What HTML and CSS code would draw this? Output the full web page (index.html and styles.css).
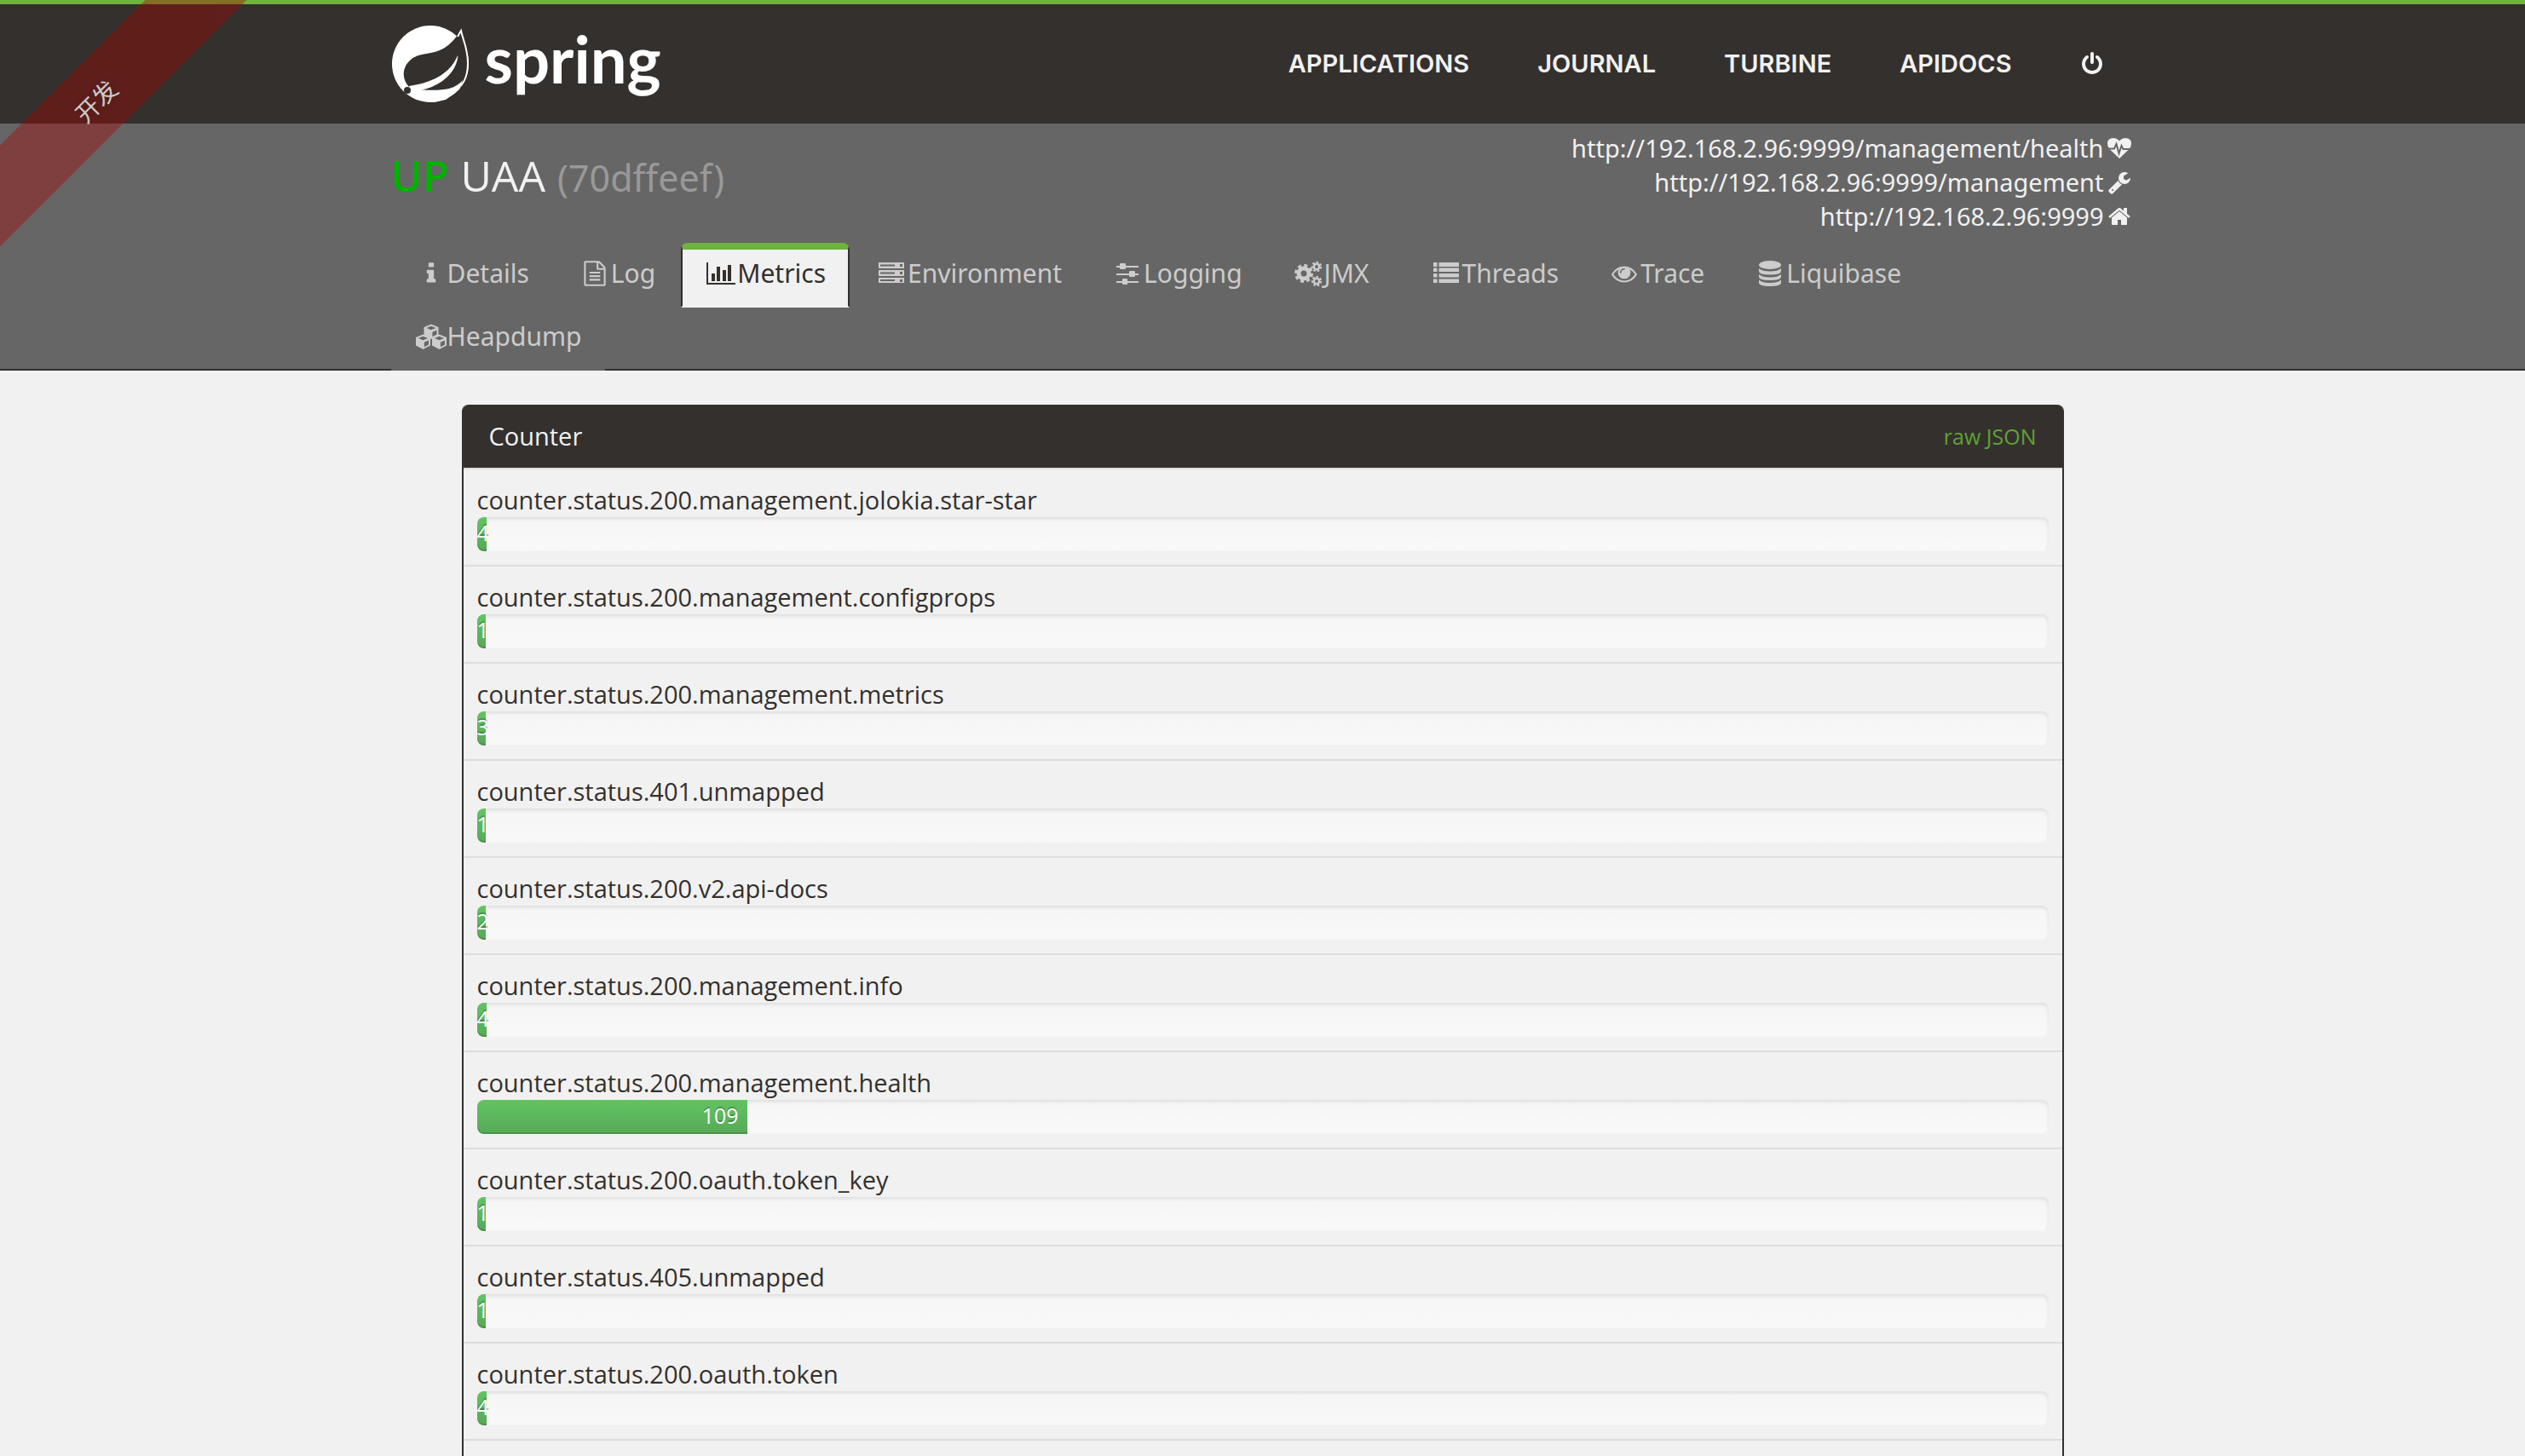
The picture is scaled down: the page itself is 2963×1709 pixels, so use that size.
FILE: index.html
```
<!DOCTYPE html>
<html lang="en">
<head>
<meta charset="utf-8">
<title>Spring Boot Admin - UAA Metrics</title>
<link rel="stylesheet" href="styles.css">
</head>
<body>
<div class="ribbon-corner"><span class="ribbon" lang="zh">开发</span></div>

<header class="topbar">
  <div class="container topbar-inner">
    <a class="logo" href="#">
      <svg class="logo-mark" viewBox="0 0 92 92" aria-hidden="true">
        <circle cx="46" cy="46" r="45" fill="#fff"/>
        <path d="M82 6C84 17 90 28 90 45C90 62 85 73 74 80C62 80 40 79 28 78C56 74 74 60 79 36C72 56 52 69 21 73C12 64 13 50 22 42C36 28 60 43 82 6Z" fill="#34302d"/>
        <path d="M78 14L82 7C84 17 90 28 90 45C90 63 83 74 73 77C63 80 45 78 27 77" fill="none" stroke="#fff" stroke-width="2"/>
        <path d="M21 72C50 68 70 56 78 36C77 59 54 75 24 77Z" fill="#fff"/>
        <path d="M28 77C50 76 72 80 84 65L80 76L64 88L50 91L30 88L20 82Z" fill="#fff"/>
        <circle cx="19" cy="77" r="4" fill="#34302d"/>
      </svg>
      <span>spring</span>
    </a>
    <nav class="main-nav" aria-label="Main">
      <a href="#">APPLICATIONS</a>
      <a href="#">JOURNAL</a>
      <a href="#">TURBINE</a>
      <a href="#">APIDOCS</a>
      <a href="#" aria-label="Sign out"><svg class="icon-power" viewBox="0 0 1792 1792"><path d="M1664 896q0 156-61 298t-164 245-245 164-298 61-298-61-245-164-164-245-61-298q0-182 80.500-343t226.500-270q43-32 95.500-25t83.500 50q32 42 24.500 94.500t-49.500 84.500q-98 74-151.500 181t-53.500 228q0 104 40.500 198.500t109.500 163.500 163.500 109.500 198.500 40.500 198.500-40.500 163.500-109.500 109.500-163.500 40.500-198.500q0-121-53.500-228t-151.500-181q-42-32-49.500-84.500t24.500-94.500q31-43 84-50t95 25q146 109 226.500 270t80.500 343zm-640-768v640q0 52-38 90t-90 38-90-38-38-90v-640q0-52 38-90t90-38 90 38 38 90z"/></svg></a>
    </nav>
  </div>
</header>

<section class="instance">
  <div class="container">
    <div class="instance-head">
      <h1><span class="status-up">UP</span> <span>UAA</span> <small>(70dffeef)</small></h1>
      <ul class="urls">
        <li><a href="#">http://192.168.2.96:9999/management/health<svg viewBox="0 0 36 28"><path d="M18 26L6.500 15Q4 12 4 8.500Q4 2 11 2Q15 2 18 5.500Q21 2 25 2Q32 2 32 8.500Q32 12 29.500 15Z"/><path d="M4 14.500H12L14.500 9L17.500 20L20.500 11L22.500 15H32" fill="none" stroke="#666" stroke-width="2"/></svg></a></li>
        <li><a href="#">http://192.168.2.96:9999/management<svg viewBox="-256 0 2304 1792"><path d="M448 1472q0-26-19-45t-45-19-45 19-19 45 19 45 45 19 45-19 19-45zm644-420l-682 682q-37 37-90 37-52 0-91-37l-106-108q-38-36-38-90 0-53 38-91l681-681q39 98 114.500 173.500t173.500 114.500zm634-435q0 39-23 106-47 134-164.500 217.500t-258.500 83.500q-185 0-316.500-131.500t-131.500-316.500 131.500-316.500 316.500-131.500q58 0 121.500 16.500t107.500 46.500q16 11 16 28t-16 28l-293 169v224l193 107q5-3 79-48.500t135.500-81 70.500-35.500q15 0 23.500 10t8.500 25z"/></svg></a></li>
        <li><a href="#">http://192.168.2.96:9999<svg viewBox="-256 0 2304 1792"><path d="M1472 992v480q0 26-19 45t-45 19h-384v-384h-256v384h-384q-26 0-45-19t-19-45v-480q0-1 .5-3t.5-3l575-474 575 474q1 2 1 6zm223-69l-62 74q-8 9-21 11h-3q-13 0-21-7l-692-577-692 577q-12 8-24 7-13-2-21-11l-62-74q-8-10-7-23.500t11-21.500l719-599q32-26 76-26t76 26l244 204v-195q0-14 9-23t23-9h192q14 0 23 9t9 23v408l219 182q10 8 11 21.500t-7 23.500z"/></svg></a></li>
      </ul>
    </div>
    <nav class="tabs" aria-label="Instance">
      <a href="#"><svg viewBox="-256 0 2304 1792"><path d="M1216 1344v128q0 26-19 45t-45 19h-512q-26 0-45-19t-19-45v-128q0-26 19-45t45-19h64v-384h-64q-26 0-45-19t-19-45v-128q0-26 19-45t45-19h384q26 0 45 19t19 45v576h64q26 0 45 19t19 45zm-128-1152v192q0 26-19 45t-45 19h-256q-26 0-45-19t-19-45v-192q0-26 19-45t45-19h256q26 0 45 19t19 45z"/></svg>Details</a>
      <a href="#"><svg viewBox="-256 0 2304 1792"><path d="M1596 380q28 28 48 76t20 88v1152q0 40-28 68t-68 28h-1344q-40 0-68-28t-28-68v-1600q0-40 28-68t68-28h896q40 0 88 20t76 48zm-444-244v376h376q-10-29-22-41l-313-313q-12-12-41-22zm384 1528v-1024h-416q-40 0-68-28t-28-68v-416h-768v1536h1280zm-1024-864q0-14 9-23t23-9h704q14 0 23 9t9 23v64q0 14-9 23t-23 9h-704q-14 0-23-9t-9-23v-64zm736 224q14 0 23 9t9 23v64q0 14-9 23t-23 9h-704q-14 0-23-9t-9-23v-64q0-14 9-23t23-9h704zm0 256q14 0 23 9t9 23v64q0 14-9 23t-23 9h-704q-14 0-23-9t-9-23v-64q0-14 9-23t23-9h704z"/></svg>Log</a>
      <a href="#" class="active" aria-current="page"><svg viewBox="0 0 38 30"><path d="M2 2h2v24h32v2H2zM8 15h4v9H8zM14 7h4v17h-4zM21 11h4v13h-4zM27 5h4v19h-4z"/></svg>Metrics</a>
      <a href="#"><svg viewBox="0 0 38 30"><path fill-rule="evenodd" d="M4 2h30v7H4zM6 4.500v2h17v-2zM29 4v3h3V4zM4 11h30v7H4zM6 13.500v2h17v-2zM29 13v3h3v-3zM4 20h30v6H4zM6 22v2h17v-2zM29 22v3h3v-3z"/></svg>Environment</a>
      <a href="#"><svg viewBox="0 0 38 30"><path d="M6 6h26v2H6zM6 15h26v2H6zM6 24h26v2H6zM10 4q0-1 1-1h5q1 0 1 1v5q0 1-1 1h-5q-1 0-1-1zM21 13q0-1 1-1h5q1 0 1 1v5q0 1-1 1h-5q-1 0-1-1zM13 22q0-1 1-1h4q1 0 1 1v5q0 1-1 1h-4q-1 0-1-1z"/></svg>Logging</a>
      <a href="#" class="tab-jmx"><svg viewBox="0 0 38 30"><g fill="none" stroke="currentColor"><circle cx="14" cy="15" r="6" stroke-width="5"/><circle cx="14" cy="15" r="9.500" stroke-width="3" stroke-dasharray="4 3.460"/><circle cx="29" cy="7" r="3.200" stroke-width="2.500"/><circle cx="29" cy="7" r="5.200" stroke-width="2" stroke-dasharray="2.500 2.170"/><circle cx="29" cy="24" r="3.200" stroke-width="2.500"/><circle cx="29" cy="24" r="5.200" stroke-width="2" stroke-dasharray="2.500 2.170"/></g></svg>JMX</a>
      <a href="#"><svg viewBox="0 0 38 30"><path d="M4 2h4.500v5H4zM10.500 2H34v5H10.500zM4 8.500h4.500v4.500H4zM10.500 8.500H34v4.500H10.500zM4 15h4.500v4.500H4zM10.500 15H34v4.500H10.500zM4 21.500h4.500V26H4zM10.500 21.500H34V26H10.500z"/></svg>Threads</a>
      <a href="#"><svg viewBox="-256 0 2304 1792"><path d="M1664 960q-152-236-381-353 61 104 61 225 0 185-131.500 316.500t-316.500 131.500-316.500-131.500-131.500-316.500q0-121 61-225-229 117-381 353 133 205 333.500 326.500t434.500 121.500 434.500-121.500 333.500-326.500zm-720-384q0-20-14-34t-34-14q-125 0-214.500 89.500t-89.500 214.500q0 20 14 34t34 14 34-14 14-34q0-86 61-147t147-61q20 0 34-14t14-34zm848 384q0 34-20 69-140 230-376.500 368.500t-499.500 138.500-499.500-139-376.500-368q-20-35-20-69t20-69q140-229 376.500-368t499.500-139 499.500 139 376.500 368q20 35 20 69z"/></svg>Trace</a>
      <a href="#"><svg viewBox="0 0 38 30"><ellipse cx="19" cy="5" rx="13" ry="5"/><path d="M6 9q4 3.500 13 3.500T32 9v3.500q0 4-13 4t-13-4zM6 16q4 3.500 13 3.500T32 16v3q0 4-13 4t-13-4zM6 22.500q4 3.500 13 3.500t13-3.500V26q0 4-13 4T6 26z"/></svg>Liquibase</a>
      <a href="#"><svg viewBox="0 0 38 30"><defs><g id="cube"><path fill-rule="evenodd" d="M0-8.500L8.500-5V4.500L0 9L-8.500 4.500V-5ZM0-6.200L-5.500-4L0-1.800L5.500-4ZM1.400 .8V6.200L6.500 3.500V-1.500Z"/></g></defs><use href="#cube" x="19" y="9"/><use href="#cube" x="9.500" y="21"/><use href="#cube" x="28.500" y="21"/></svg>Heapdump</a>
    </nav>
  </div>
</section>

<main class="panel">
  <div class="panel-head"><h2>Counter</h2><a href="#">raw JSON</a></div>
  <ul class="metrics">
    <li>counter.status.200.management.jolokia.star-star<div class="track"><div class="fill" style="width:.63%">4</div></div></li>
    <li>counter.status.200.management.configprops<div class="track"><div class="fill" style="width:.16%">1</div></div></li>
    <li>counter.status.200.management.metrics<div class="track"><div class="fill" style="width:.47%">3</div></div></li>
    <li>counter.status.401.unmapped<div class="track"><div class="fill" style="width:.16%">1</div></div></li>
    <li>counter.status.200.v2.api-docs<div class="track"><div class="fill" style="width:.32%">2</div></div></li>
    <li>counter.status.200.management.info<div class="track"><div class="fill" style="width:.63%">4</div></div></li>
    <li>counter.status.200.management.health<div class="track"><div class="fill" style="width:17.2%">109</div></div></li>
    <li>counter.status.200.oauth.token_key<div class="track"><div class="fill" style="width:.16%">1</div></div></li>
    <li>counter.status.405.unmapped<div class="track"><div class="fill" style="width:.16%">1</div></div></li>
    <li>counter.status.200.oauth.token<div class="track"><div class="fill" style="width:.63%">4</div></div></li>
  </ul>
</main>
</body>
</html>
```
FILE: styles.css
```
* { box-sizing: border-box; }

body {
  display: flex;
  flex-direction: column;
  min-height: 100vh;
  margin: 0;
  background: #f1f1f1;
  color: #34302d;
  font: 29px/40px "Open Sans", "Noto Sans CJK SC", sans-serif;
}

h1, h2, ul { margin: 0; padding: 0; font-weight: 400; list-style: none; }
a { color: inherit; text-decoration: none; }
svg { fill: currentColor; flex: none; }

.container {
  width: 100%;
  max-width: 2046px;
  margin: 0 auto;
}

/* Corner ribbon */
.ribbon-corner {
  position: absolute;
  top: 0;
  left: 0;
  width: 300px;
  height: 300px;
  overflow: hidden;
  pointer-events: none;
}
.ribbon {
  position: absolute;
  top: 76px;
  left: -103px;
  width: 430px;
  background: rgba(170, 0, 0, .5);
  color: #fff;
  font: 28px/84px "Noto Sans CJK SC", sans-serif;
  text-align: center;
  text-shadow: 0 0 10px rgba(0, 0, 0, .3);
  opacity: .75;
  transform: rotate(-45deg);
}

/* Top bar */
.topbar {
  border-top: 5px solid #6db33f;
  background: #34302d;
  color: #f1f1f1;
}
.topbar-inner {
  display: flex;
  justify-content: space-between;
  align-items: center;
  height: 140px;
}
.logo {
  display: flex;
  align-items: center;
  gap: 18px;
  color: #fff;
  font: 700 76px/92px Lato, sans-serif;
}
.logo span { padding-bottom: 12px; }
.logo-mark { width: 92px; height: 92px; }
.main-nav {
  display: flex;
  align-items: center;
  font: 600 29px/40px Inter, sans-serif;
}
.main-nav a { padding: 0 40px; }
.main-nav a:last-child { padding-right: 36px; }
.icon-power { display: block; width: 28px; height: 28px; }

/* Instance header */
.instance {
  padding-top: 9px;
  border-bottom: 2px solid #34302d;
  background: #666;
  color: #f1f1f1;
}
.instance-head {
  display: flex;
  justify-content: space-between;
  margin-bottom: 11px;
}
h1 {
  display: flex;
  align-items: baseline;
  gap: 14px;
  padding-top: 22px;
  font-size: 50px;
  line-height: 60px;
}
.status-up { color: #00b300; font-weight: 600; }
h1 small { color: #999; font: 43px/60px "Noto Sans", sans-serif; }
.urls { font-family: "Noto Sans", sans-serif; text-align: right; }
.urls a { display: flex; justify-content: flex-end; align-items: center; }
.urls svg { width: 36px; height: 28px; }

.tabs {
  display: flex;
  flex-wrap: wrap;
  column-gap: 2px;
  margin-bottom: -2px;
  color: #ccc;
  font: 30px/40px "Noto Sans", sans-serif;
}
.tabs a {
  display: flex;
  height: 76px;
  margin-bottom: -2px;
  padding: 16px 28px;
  background: #666;
}
.tabs a:last-child { margin-bottom: 0; }
.tabs svg { width: 38px; height: 30px; margin-top: 5px; }
.tabs .tab-jmx { min-width: 160px; }
.tabs .active {
  padding: 8px 26px;
  border: 2px solid #34302d;
  border-top: 8px solid #6db33f;
  border-bottom-color: #f1f1f1;
  border-radius: 8px 8px 0 0;
  background: #f1f1f1;
  color: #34302d;
}

/* Metrics panel */
.panel {
  flex: 1;
  width: 100%;
  max-width: 1880px;
  margin: 40px auto 0;
  border: solid #34302d;
  border-width: 0 2px;
  border-radius: 8px 8px 0 0;
}
.panel-head {
  display: flex;
  justify-content: space-between;
  align-items: center;
  height: 74px;
  padding: 0 30px;
  border-radius: 6px 6px 0 0;
  background: #34302d;
}
h2 { color: #f1f1f1; font-size: 29px; }
.panel-head a { color: #5fa134; font-size: 25px; }
.metrics { border-bottom: 2px solid #ddd; }
.metrics li { padding: 16px; border-top: 2px solid #ddd; }
.track {
  height: 40px;
  border-radius: 8px;
  background: linear-gradient(#f5f5f5, #f9f9f9);
  box-shadow: inset 0 2px 4px rgba(0, 0, 0, .1);
}
.fill {
  height: 40px;
  padding-right: 10px;
  border-radius: 8px 0 0 8px;
  background: linear-gradient(#62c462, #57a957);
  box-shadow: inset 0 -2px 0 rgba(0, 0, 0, .15);
  color: #fff;
  font-size: 25px;
  line-height: 36px;
  text-align: right;
  text-shadow: 0 -2px 0 rgba(0, 0, 0, .25);
}
```
